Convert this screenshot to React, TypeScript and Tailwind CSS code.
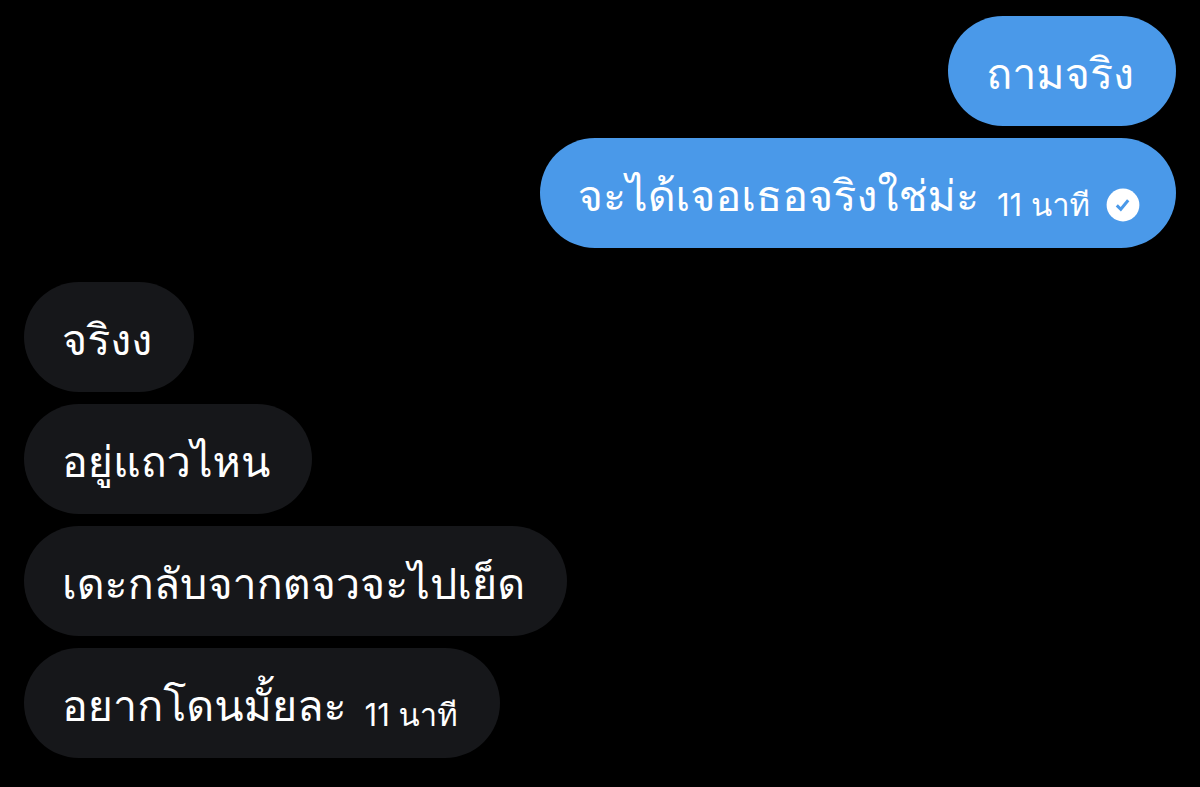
import { clsx } from 'clsx'

type Message = {
  id: number
  text: string
  mine: boolean
  time?: string
  seen?: boolean
}

const groups: Message[][] = [
  [
    { id: 1, text: 'ถามจริง', mine: true },
    { id: 2, text: 'จะได้เจอเธอจริงใช่ม่ะ', mine: true, time: '11 นาที', seen: true },
  ],
  [
    { id: 3, text: 'จริงง', mine: false },
    { id: 4, text: 'อยู่แถวไหน', mine: false },
    { id: 5, text: 'เดะกลับจากตจวจะไปเย็ด', mine: false },
    { id: 6, text: 'อยากโดนมั้ยละ', mine: false, time: '11 นาที' },
  ],
]

function SeenIcon() {
  return (
    <svg viewBox="0 0 34 34" className="size-[34px] shrink-0" aria-hidden="true">
      <circle cx="17" cy="17" r="16.4" fill="#fff" />
      <path
        d="M10.8 17.4l4 3.9 7.4-9"
        fill="none"
        stroke="#4a99e9"
        strokeWidth="3"
      />
    </svg>
  )
}

function Bubble({ message }: { message: Message }) {
  return (
    <li
      className={clsx(
        'flex min-h-[110px] max-w-full items-center rounded-[55px] pt-1 pl-[38px] text-white',
        message.seen ? 'pr-9' : 'pr-[42px]',
        message.mine ? 'self-end bg-[#4a99e9]' : 'self-start bg-[#16171a]'
      )}
    >
      <p className="text-[43px] leading-[60px]">{message.text}</p>
      {message.time && (
        <span className="ml-[18px] mt-5 flex items-center gap-4 text-[31px] leading-[40px]">
          {message.time}
          {message.seen && <SeenIcon />}
        </span>
      )}
    </li>
  )
}

export default function App() {
  return (
    <main className="flex min-h-screen flex-col gap-[34px] bg-black px-6 py-4 font-[Inter,Loma,sans-serif]">
      {groups.map((group) => (
        <ul key={group[0].id} className="flex flex-col gap-3">
          {group.map((message) => (
            <Bubble key={message.id} message={message} />
          ))}
        </ul>
      ))}
    </main>
  )
}
